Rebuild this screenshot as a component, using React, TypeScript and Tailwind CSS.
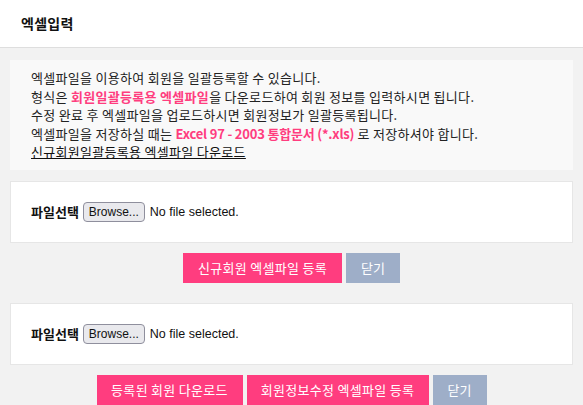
import React from "react";

const font = { fontFamily: '"Noto Sans CJK KR", "Noto Sans", sans-serif' };
const latin = { fontFamily: '"Liberation Sans", Arial, sans-serif' };

function FileRow() {
  return (
    <div className="h-[62px] bg-white border border-[#e6e6e6] flex items-center pl-[20px]">
      <span className="text-[13px] font-bold text-[#111] mr-[4px]">파일선택</span>
      <span
        className="h-[20px] w-[62px] flex items-center justify-center rounded-[4px] border border-[#8f8f9d] bg-[#e9e9ed] text-[12px] text-[#111]"
        style={latin}
      >
        Browse...
      </span>
      <span className="ml-[5px] text-[12.5px] text-[#111]" style={latin}>
        No file selected.
      </span>
    </div>
  );
}

export default function App() {
  return (
    <div className="w-[583px] h-[405px] overflow-hidden bg-[#f2f2f2] text-[#222]" style={font}>
      <div className="h-[48px] bg-white border-b border-[#dedede] flex items-center pl-[21px]">
        <h1 className="text-[14px] font-bold text-[#111] tracking-[0.3px]">엑셀입력</h1>
      </div>

      <div className="px-[10px] pt-[12px]">
        <div className="h-[110px] bg-[#f9f9f9] pl-[21px] py-[9px] text-[13px] tracking-[0.3px] leading-[18.5px] text-[#222]">
          <p>엑셀파일을 이용하여 회원을 일괄등록할 수 있습니다.</p>
          <p>
            형식은 <span className="font-bold text-[#ff3d7f]">회원일괄등록용 엑셀파일</span>을 다운로드하여 회원 정보를
            입력하시면 됩니다.
          </p>
          <p>수정 완료 후 엑셀파일을 업로드하시면 회원정보가 일괄등록됩니다.</p>
          <p>
            엑셀파일을 저장하실 때는{" "}
            <span className="font-bold text-[#ff3d7f] tracking-[-0.2px]">Excel 97 - 2003 통합문서 (*.xls)</span> 로
            저장하셔야 합니다.
          </p>
          <p>
            <a className="underline text-[#111]">신규회원일괄등록용 엑셀파일 다운로드</a>
          </p>
        </div>

        <div className="mt-[11px]">
          <FileRow />
        </div>
        <div className="mt-[10px] flex justify-center gap-[4px]">
          <button className="h-[30px] w-[159px] bg-[#ff3d7f] text-white text-[13px] tracking-[0.3px]">
            신규회원 엑셀파일 등록
          </button>
          <button className="h-[30px] w-[54px] bg-[#9eaec8] text-white text-[13px]">닫기</button>
        </div>

        <div className="mt-[20px]">
          <FileRow />
        </div>
        <div className="mt-[10px] flex justify-center gap-[4px]">
          <button className="h-[30px] w-[146px] bg-[#ff3d7f] text-white text-[13px] tracking-[0.3px]">
            등록된 회원 다운로드
          </button>
          <button className="h-[30px] w-[182px] bg-[#ff3d7f] text-white text-[13px] tracking-[0.3px]">
            회원정보수정 엑셀파일 등록
          </button>
          <button className="h-[30px] w-[54px] bg-[#9eaec8] text-white text-[13px]">닫기</button>
        </div>
      </div>
    </div>
  );
}
